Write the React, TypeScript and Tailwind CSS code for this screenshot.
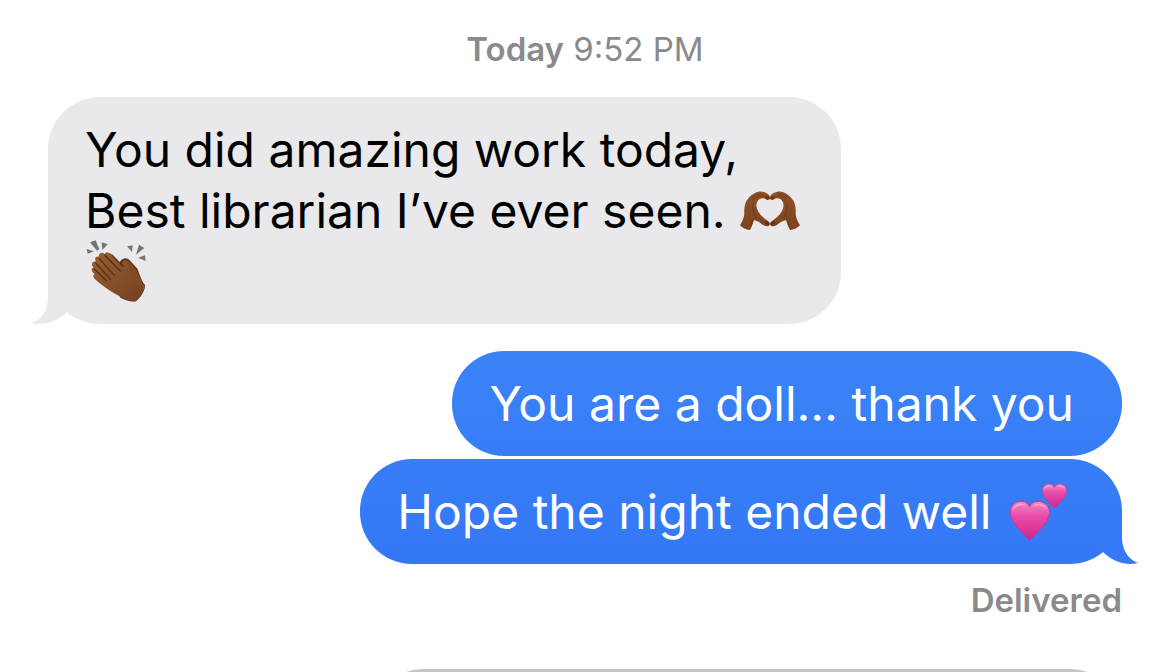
import type { ReactNode } from "react";

function HeartHands() {
  return (
    <svg
      role="img"
      aria-label="Heart hands"
      viewBox="24 24 186 132"
      className="inline-block h-11 w-[62px] align-[-5px]"
    >
      <defs>
        <linearGradient id="hand" x1="0" y1="0" x2="0" y2="1">
          <stop offset="0" stopColor="#8f5229" />
          <stop offset="1" stopColor="#7d421d" />
        </linearGradient>
        <g id="heart-hand">
          <path
            d="M27 133 C33 123 38 112 40 101 C39 87 40 73 46 60 C55 46 68 35 82 32 C96 29 114 37 117 48 C118 55 113 59 107 56 C97 49 86 51 80 60 C74 69 76 80 81 90 C88 103 99 112 110 119 C118 124 119 131 113 135 C104 138 94 131 84 123 C78 120 72 119 69 117 C66 128 62 138 57 147 C45 146 34 141 27 133Z"
            fill="url(#hand)"
          />
          <path
            d="M63 50 C71 43 80 39 91 39 M65 57 C74 49 84 44 99 45 M67 66 C63 82 68 99 78 112 M66 114 L58 137"
            fill="none"
            stroke="#59290f"
            strokeWidth="3"
            strokeLinecap="round"
            opacity=".5"
          />
          <path
            d="M104 45 C111 44 117 48 116 54 C110 57 104 53 102 48Z M104 121 C112 121 117 126 114 132 C108 134 103 130 101 125Z"
            fill="#59290f"
            opacity=".65"
          />
        </g>
      </defs>
      <use href="#heart-hand" />
      <use href="#heart-hand" transform="translate(234 0) scale(-1 1)" />
    </svg>
  );
}

function ClappingHands() {
  return (
    <svg
      role="img"
      aria-label="Clapping hands"
      viewBox="21 15 183 189"
      className="-my-1 ml-px inline-block h-[63px] w-[61px] align-[-10px]"
    >
      <defs>
        <linearGradient id="clap" x1="0" y1="0" x2="1" y2="1">
          <stop offset="0" stopColor="#97602f" />
          <stop offset="1" stopColor="#754022" />
        </linearGradient>
      </defs>
      <g fill="#747477">
        <path d="M33 22 L50 16 L61 43 L54 47Z" />
        <path d="M68 22 L86 28 L70 45Z" />
        <path d="M23 42 L45 49 L26 56Z" />
        <path d="M144 34 L161 31 L159 51Z" />
        <path d="M180 29 L196 39 L171 59Z" />
        <path d="M177 68 L198 61 L200 78Z" />
      </g>
      <path
        d="M124 78 C134 67 145 68 153 77 L174 100 C181 112 183 132 198 150 C199 168 184 188 171 199 C155 202 141 195 124 188 L105 140Z"
        fill="#5e321b"
      />
      <path
        d="M128 82 C138 72 146 73 153 83 L171 104 C181 118 181 135 197 150 C197 168 182 186 170 196 L136 180Z"
        fill="#824a27"
      />
      <path
        d="M39 91 C37 82 44 77 51 80 C45 70 50 63 60 65 C58 54 69 50 77 57 C82 50 91 52 97 58 L132 92 C130 83 134 75 140 78 C148 83 147 93 151 102 L164 132 C169 145 177 149 191 158 C190 174 180 190 168 199 C151 199 134 190 115 180 C94 169 65 149 48 133 C40 124 43 117 48 118 C38 111 34 99 43 99Z"
        fill="url(#clap)"
      />
      <path
        d="M60 70 L106 121 M77 61 L124 108 M50 84 L95 133 M46 102 L82 137 M99 60 L132 94"
        fill="none"
        stroke="#4c2712"
        strokeWidth="4"
        strokeLinecap="round"
        opacity=".8"
      />
    </svg>
  );
}

function TwoHearts() {
  return (
    <svg
      role="img"
      aria-label="Two hearts"
      viewBox="24 24 177 180"
      className="ml-1 inline-block h-[60px] w-[59px] align-[-13px]"
    >
      <defs>
        <linearGradient id="pink" x1="0" y1="0" x2="0" y2="1">
          <stop offset="0" stopColor="#f08abf" />
          <stop offset=".4" stopColor="#e84aa9" />
          <stop offset="1" stopColor="#cf2489" />
        </linearGradient>
        <g id="heart">
          <path
            d="M86 98 C78 78 51 77 36 92 C22 107 28 130 39 147 C51 166 72 182 86 200 C100 182 121 166 134 147 C145 130 151 107 137 92 C121 77 94 78 86 98Z"
            fill="url(#pink)"
            stroke="#c73695"
            strokeWidth="3"
          />
          <path
            d="M35 109 C36 89 65 81 76 96 C65 91 45 95 35 109Z M97 96 C108 81 134 89 137 107 C126 95 111 92 97 96Z"
            fill="#f9b8d8"
            opacity=".65"
          />
        </g>
      </defs>
      <use href="#heart" />
      <use href="#heart" transform="translate(107 -21) scale(.62)" />
    </svg>
  );
}

function Tail({ className }: { className: string }) {
  return (
    <svg
      aria-hidden="true"
      viewBox="0 0 50 52"
      className={`absolute bottom-0 h-[52px] w-[50px] ${className}`}
    >
      <path d="M0 0 H34 V26 C34 38 41 48 50 51 C39 54 25 50 15 40Z" fill="currentColor" />
    </svg>
  );
}

function Bubble({ className, children }: { className: string; children: ReactNode }) {
  return (
    <div className={`relative w-fit rounded-[52px] py-[22px] text-5xl leading-[61px] ${className}`}>
      {children}
    </div>
  );
}

export default function App() {
  return (
    <main className="flex h-screen flex-col overflow-hidden bg-white px-12 pt-[29px] font-['Inter','Liberation_Sans',sans-serif]">
      <header className="text-center text-[33px] leading-10 text-[#8a8a8e]">
        <time>
          <span className="font-semibold">Today</span> 9:52 PM
        </time>
      </header>

      <Bubble className="mt-7 self-start bg-[#e9e9eb] pr-10 pl-[37px] text-black">
        <p>
          You did amazing work today,
          <br />
          Best librarian I’ve ever seen. <HeartHands />
          <br />
          <ClappingHands />
        </p>
        <Tail className="-left-4 -scale-x-100 text-[#e9e9eb]" />
      </Bubble>

      <section className="mt-[27px] flex flex-col items-end gap-[3px]">
        <Bubble className="bg-linear-to-b from-[#3b82f7] to-[#387df6] pr-12 pl-[37px] text-white">
          <p>You are a doll… thank you</p>
        </Bubble>
        <Bubble className="bg-linear-to-b from-[#387df6] to-[#3478f6] pr-[54px] pl-[37px] text-white">
          <p>
            Hope the night ended well <TwoHearts />
          </p>
          <Tail className="-right-4 text-[#357af6]" />
        </Bubble>
      </section>

      <p className="mt-4 self-end text-[33px] leading-10 font-semibold text-[#8a8a8e]">Delivered</p>
      <div className="mt-[49px] h-[105px] w-[751px] shrink-0 self-end rounded-[52px] bg-[#c5c5c7]" />
    </main>
  );
}
